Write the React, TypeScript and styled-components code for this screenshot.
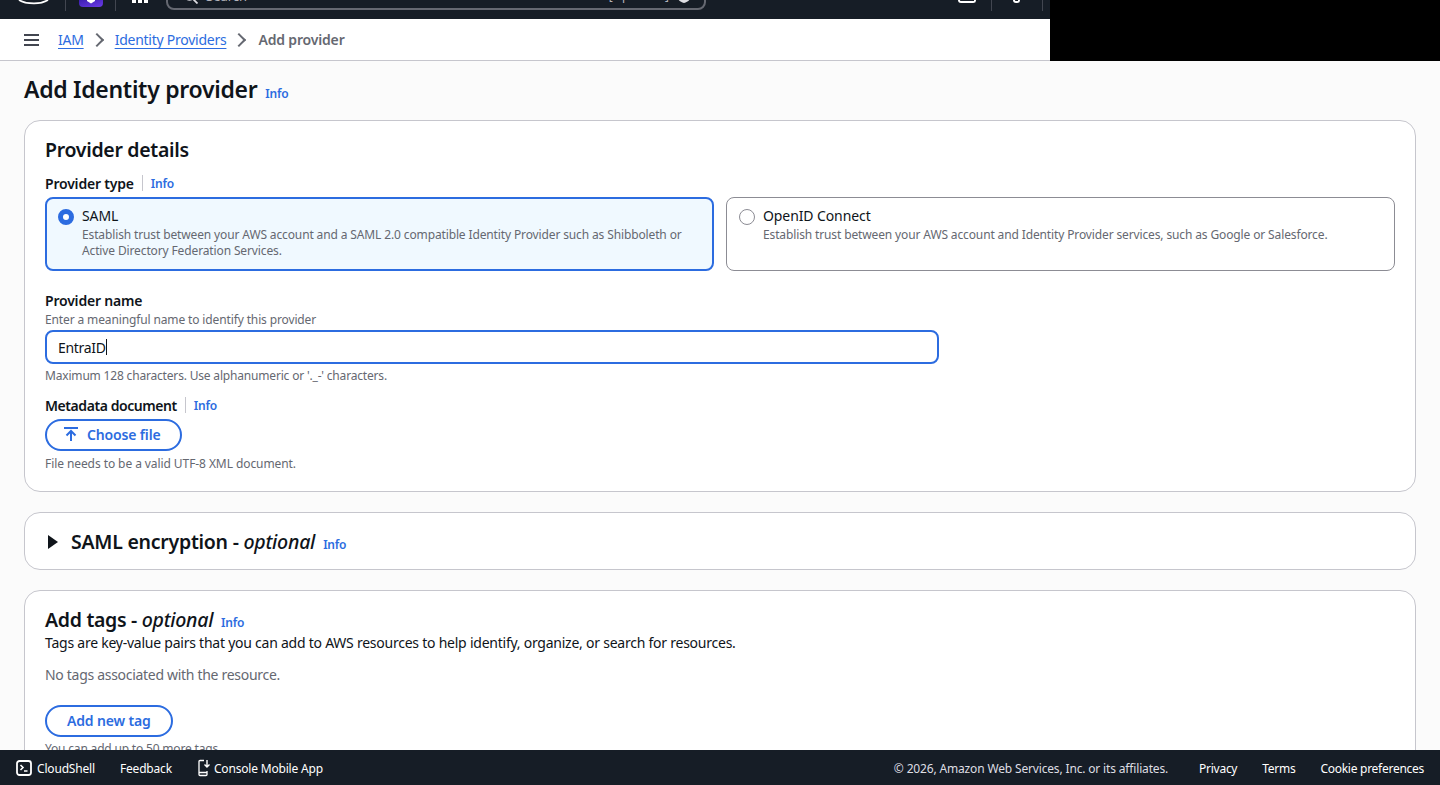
import styled, { createGlobalStyle } from 'styled-components';

const BLUE = '#2c6ce0';

const GlobalStyle = createGlobalStyle`
  html,
  body {
    margin: 0;
    height: 100%;
    overflow: hidden;
    font-family: 'Noto Sans', 'Open Sans', sans-serif;
    background: #fbfbfb;
  }
`;

const InfoLink = () => <InfoAnchor>Info</InfoAnchor>;

const App = () => {
  return (
    <>
      <GlobalStyle />
      <Page>
        <TopArea>
          <TopLeft>
            <ConsoleBar>
              <LogoSlot>
                <svg width="34" height="6" viewBox="0 0 34 6">
                  <path d="M1 0c4 2.600 10 3.400 15 3.400 5 0 10-1 14-3.400" fill="none" stroke="#fff" strokeWidth="1.800" />
                </svg>
              </LogoSlot>
              <BarDivider />
              <ServiceIcon width="24" height="7" viewBox="0 0 24 7">
                <defs>
                  <linearGradient id="svc" x1="0" y1="0" x2="1" y2="1">
                    <stop offset="0" stopColor="#3d1fb0" />
                    <stop offset="1" stopColor="#6a3be8" />
                  </linearGradient>
                </defs>
                <path d="M0 0h24v3a4 4 0 0 1-4 4H4a4 4 0 0 1-4-4z" fill="url(#svc)" />
                <path d="M8 0h8v1L12 3.500 8 1z" fill="#fff" />
              </ServiceIcon>
              <BarDivider />
              <GridDots>
                <i />
                <i />
                <i />
              </GridDots>
              <SearchBox>
                <SearchIcon width="14" height="14" viewBox="0 0 14 14">
                  <circle cx="5.500" cy="5.500" r="4.500" fill="none" stroke="#dedee3" strokeWidth="1.600" />
                  <path d="M9 9l4.500 4.500" stroke="#dedee3" strokeWidth="1.800" />
                </SearchIcon>
                <SearchText>Search</SearchText>
                <SearchHint>
                  [Option+S]
                  <SearchIcon width="14" height="14" viewBox="0 0 14 14">
                    <path d="M7 1 13 4v4c0 2.500-3 4-6 5-3-1-6-2.500-6-5V4z" fill="#dedee3" />
                  </SearchIcon>
                </SearchHint>
              </SearchBox>
              <BarRight>
                <MiniSquare />
                <BarDivider />
                <MiniDot />
                <BarDivider />
              </BarRight>
            </ConsoleBar>
            <Breadcrumbs>
              <MenuButton aria-label="Menu">
                <svg width="15" height="14" viewBox="0 0 15 14">
                  <path d="M0 2h15M0 7h15M0 12h15" stroke="#424650" strokeWidth="2" fill="none" />
                </svg>
              </MenuButton>
              <CrumbLink>IAM</CrumbLink>
              <Chevron />
              <CrumbLink>Identity Providers</CrumbLink>
              <Chevron />
              <CrumbCurrent>Add provider</CrumbCurrent>
            </Breadcrumbs>
          </TopLeft>
          <BlackBlock />
        </TopArea>

        <Main>
          <PageHeading>
            <PageTitle>Add Identity provider</PageTitle>
            <InfoLink />
          </PageHeading>

          <Card>
            <CardTitle>Provider details</CardTitle>

            <Label>
              Provider type
              <LabelDivider />
              <InfoLink />
            </Label>
            <TileRow>
              <Tile $selected>
                <Radio $checked />
                <div>
                  <TileTitle>SAML</TileTitle>
                  <TileText>
                    Establish trust between your AWS account and a SAML 2.0 compatible Identity Provider such as
                    Shibboleth or Active Directory Federation Services.
                  </TileText>
                </div>
              </Tile>
              <Tile>
                <Radio />
                <div>
                  <TileTitle>OpenID Connect</TileTitle>
                  <TileText>
                    Establish trust between your AWS account and Identity Provider services, such as Google or
                    Salesforce.
                  </TileText>
                </div>
              </Tile>
            </TileRow>

            <NameField>
              <Label>Provider name</Label>
              <Hint>Enter a meaningful name to identify this provider</Hint>
              <NameInput>
                EntraID
                <InputCaret />
              </NameInput>
              <Constraint>Maximum 128 characters. Use alphanumeric or '._-' characters.</Constraint>
            </NameField>

            <MetadataField>
              <MetadataLabel>
                Metadata document
                <LabelDivider />
                <InfoLink />
              </MetadataLabel>
              <PillButton $withIcon>
                <svg width="16" height="16" viewBox="0 0 16 16">
                  <path d="M1 2h14M8 15V5M3.500 9.500 8 5l4.500 4.500" fill="none" stroke={BLUE} strokeWidth="2" />
                </svg>
                Choose file
              </PillButton>
              <FileConstraint>File needs to be a valid UTF-8 XML document.</FileConstraint>
            </MetadataField>
          </Card>

          <CollapsedCard>
            <ExpandCaret viewBox="0 0 12 14" width="12" height="14">
              <path d="M1 0l10 7-10 7z" fill="#0f141a" />
            </ExpandCaret>
            <CardTitle>
              SAML encryption - <Optional>optional</Optional>
            </CardTitle>
            <InfoLink />
          </CollapsedCard>

          <Card>
            <TagsHeading>
              <CardTitle>
                Add tags - <Optional>optional</Optional>
              </CardTitle>
              <InfoLink />
            </TagsHeading>
            <BodyText>
              Tags are key-value pairs that you can add to AWS resources to help identify, organize, or search for
              resources.
            </BodyText>
            <EmptyText>No tags associated with the resource.</EmptyText>
            <PillButton>Add new tag</PillButton>
            <Constraint>You can add up to 50 more tags.</Constraint>
          </Card>
        </Main>

        <Footer>
          <FooterItem>
            <svg width="16" height="16" viewBox="0 0 16 16">
              <rect x="1" y="1" width="14" height="14" rx="2.500" fill="none" stroke="#fff" strokeWidth="1.800" />
              <path d="M4.500 5l2.500 2.500L4.500 10M8 11h3.500" fill="none" stroke="#fff" strokeWidth="1.600" />
            </svg>
            CloudShell
          </FooterItem>
          <FooterItem>Feedback</FooterItem>
          <MobileItem>
            <svg width="12" height="18" viewBox="0 0 12 18">
              <path d="M6 1.500H2a1 1 0 0 0-1 1v13a1 1 0 0 0 1 1h6a1 1 0 0 0 1-1V12M1 13.500h8" fill="none" stroke="#fff" strokeWidth="1.300" />
              <path d="M9 1v7M6.500 5.500 9 8l2.500-2.500" fill="none" stroke="#fff" strokeWidth="1.400" />
            </svg>
            Console Mobile App
          </MobileItem>
          <FooterRight>
            <FooterCopy>© 2026, Amazon Web Services, Inc. or its affiliates.</FooterCopy>
            <FooterItem>Privacy</FooterItem>
            <FooterItem>Terms</FooterItem>
            <FooterItem>Cookie preferences</FooterItem>
          </FooterRight>
        </Footer>
      </Page>
    </>
  );
};

const Page = styled.div`
  display: flex;
  flex-direction: column;
  height: 785px;
  overflow: hidden;
  color: #0f141a;
`;

const TopArea = styled.div`
  display: flex;
  flex: none;
  height: 61px;
`;

const TopLeft = styled.div`
  display: flex;
  flex-direction: column;
  width: 1050px;
`;

const BlackBlock = styled.div`
  flex: 1;
  background: #000;
`;

const ConsoleBar = styled.div`
  display: flex;
  align-items: flex-end;
  flex: none;
  height: 19px;
  padding-left: 18px;
  overflow: hidden;
  background: #161d26;
`;

const LogoSlot = styled.div`
  display: flex;
  width: 47px;
  height: 19px;
  svg {
    display: block;
  }
`;

const BarDivider = styled.span`
  width: 1px;
  height: 11px;
  margin-bottom: 8px;
  background: #424650;
`;

const ServiceIcon = styled.svg`
  margin: 0 12px 12px 13px;
`;

const GridDots = styled.span`
  display: flex;
  gap: 2px;
  margin: 0 0 16px 16px;
  i {
    width: 4px;
    height: 3px;
    background: #fff;
  }
`;

const SearchBox = styled.div`
  display: flex;
  flex: none;
  align-items: flex-start;
  gap: 8px;
  box-sizing: border-box;
  width: 540px;
  height: 28px;
  margin: 0 0 9px 18px;
  padding: 0 13px 0 16px;
  border: 2px solid #656871;
  border-radius: 8px;
  font-size: 13px;
  line-height: 14px;
  color: #b4b4bb;
`;

const SearchIcon = styled.svg`
  flex: none;
  margin-top: 6px;
`;

const SearchText = styled.span`
  padding-top: 5px;
`;

const SearchHint = styled.span`
  display: flex;
  gap: 8px;
  margin-left: auto;
  padding-top: 5px;
  font-size: 12px;

  svg {
    margin-top: 1px;
  }
`;

const BarRight = styled.div`
  display: flex;
  align-items: flex-end;
  margin-left: auto;
  margin-right: 7px;
`;

const MiniSquare = styled.span`
  width: 14px;
  height: 2px;
  margin: 0 15px 16px 0;
  border: solid #fff;
  border-width: 0 2px 2px;
  border-radius: 0 0 3px 3px;
`;

const MiniDot = styled.span`
  width: 3px;
  height: 1px;
  margin: 0 22px 16px 21px;
  border: solid #fff;
  border-width: 0 2px 2px;
  border-radius: 0 0 3px 3px;
`;

const Breadcrumbs = styled.nav`
  display: flex;
  flex: 1;
  align-items: center;
  box-sizing: border-box;
  padding-left: 24px;
  border-bottom: 1px solid #c6c6cd;
  background: #fff;
  font-size: 14px;
  letter-spacing: -0.25px;
`;

const MenuButton = styled.button`
  display: flex;
  width: 15px;
  margin-right: 19px;
  padding: 0;
  border: 0;
  background: none;
`;

const CrumbLink = styled.a`
  color: ${BLUE};
  text-decoration: underline;
  text-underline-offset: 3px;
`;

const Chevron = styled.span`
  box-sizing: border-box;
  width: 10px;
  height: 10px;
  margin: 0 13px 0 8px;
  border: solid #656871;
  border-width: 2px 2px 0 0;
  transform: rotate(45deg);
`;

const CrumbCurrent = styled.span`
  margin-left: 1px;
  font-weight: 600;
  letter-spacing: -0.17px;
  color: #656871;
`;

const Main = styled.main`
  flex: 1;
  min-height: 0;
  padding: 0 24px;
  overflow: hidden;
`;

const PageHeading = styled.div`
  display: flex;
  align-items: baseline;
  gap: 8px;
  height: 59px;
  padding-top: 12px;
  box-sizing: border-box;
`;

const PageTitle = styled.h1`
  margin: 0;
  font-size: 23px;
  line-height: 33px;
  font-weight: 600;
  letter-spacing: -0.3px;
`;

const InfoAnchor = styled.a`
  font-size: 12px;
  font-weight: 600;
  letter-spacing: -0.2px;
  color: ${BLUE};
`;

const Card = styled.section`
  box-sizing: border-box;
  margin-bottom: 20px;
  padding: 15px 20px 19px;
  border: 1px solid #c6c6cd;
  border-radius: 16px;
  background: #fff;
`;

const CardTitle = styled.h2`
  margin: 0 0 10px;
  font-size: 19.5px;
  line-height: 27px;
  font-weight: 600;
  letter-spacing: -0.3px;
`;

const Optional = styled.em`
  font-weight: 500;
  font-style: italic;
`;

const Label = styled.div`
  display: flex;
  align-items: center;
  height: 20px;
  font-size: 14px;
  font-weight: 600;
  letter-spacing: -0.2px;
`;

const MetadataLabel = styled(Label)`
  letter-spacing: -0.43px;
`;

const LabelDivider = styled.span`
  width: 1px;
  height: 16px;
  margin: 0 8px;
  background: #c6c6cd;
`;

const TileRow = styled.div`
  display: grid;
  grid-template-columns: 1fr 1fr;
  gap: 12px;
  margin-top: 4px;
`;

const Tile = styled.div<{ $selected?: boolean }>`
  display: flex;
  gap: 8px;
  box-sizing: border-box;
  height: 74px;
  padding: ${({ $selected }) => ($selected ? '8px 12px 8px 11px' : '9px 12px')};
  border: ${({ $selected }) => ($selected ? `2px solid ${BLUE}` : '1px solid #8c8c94')};
  border-radius: 8px;
  background: ${({ $selected }) => ($selected ? '#f0f9ff' : '#fff')};
`;

const Radio = styled.span<{ $checked?: boolean }>`
  flex: none;
  box-sizing: border-box;
  width: 16px;
  height: 16px;
  margin-top: 2px;
  border: ${({ $checked }) => ($checked ? `5px solid ${BLUE}` : '1px solid #8c8c94')};
  border-radius: 50%;
  background: #fff;
`;

const TileTitle = styled.div`
  margin-bottom: 2px;
  font-size: 14px;
  line-height: 18px;
  letter-spacing: -0.1px;
`;

const TileText = styled.div`
  font-size: 12px;
  line-height: 16px;
  letter-spacing: -0.13px;
  color: #656871;
`;

const NameField = styled.div`
  margin-top: 19px;
`;

const MetadataField = styled.div`
  margin-top: 11px;
`;

const Hint = styled.div`
  margin-top: 2px;
  font-size: 12px;
  line-height: 16px;
  letter-spacing: -0.13px;
  color: #656871;
`;

const NameInput = styled.div`
  display: flex;
  align-items: center;
  box-sizing: border-box;
  width: 894px;
  height: 34px;
  margin-top: 2px;
  padding-left: 11px;
  border: 2px solid ${BLUE};
  border-radius: 8px;
  font-size: 14px;
  letter-spacing: -0.3px;
`;

const InputCaret = styled.span`
  width: 1px;
  height: 16px;
  background: #0f141a;
`;

const Constraint = styled.div`
  margin-top: 4px;
  font-size: 12px;
  line-height: 16px;
  letter-spacing: -0.18px;
  color: #656871;
`;

const FileConstraint = styled(Constraint)`
  margin-top: 5px;
  letter-spacing: -0.08px;
`;

const PillButton = styled.button<{ $withIcon?: boolean }>`
  display: flex;
  align-items: center;
  justify-content: center;
  gap: 8px;
  box-sizing: border-box;
  height: 32px;
  margin-top: 4px;
  padding: ${({ $withIcon }) => ($withIcon ? '0 19px 2px 16px' : '0 20px 2px')};
  border: 2px solid ${BLUE};
  border-radius: 16px;
  background: #fff;
  font-family: inherit;
  font-size: 14px;
  font-weight: 600;
  letter-spacing: -0.15px;
  color: ${BLUE};
`;

const CollapsedCard = styled(Card)`
  display: flex;
  align-items: baseline;
  gap: 8px;
  height: 58px;
  padding: 15px 20px 0 22px;

  ${CardTitle} {
    margin: 0;
    letter-spacing: -0.25px;
  }
`;

const ExpandCaret = styled.svg`
  align-self: center;
  margin-right: 4px;
  margin-top: -14px;
`;

const TagsHeading = styled.div`
  display: flex;
  align-items: baseline;
  gap: 8px;

  ${CardTitle} {
    margin: 0;
  }
`;

const BodyText = styled.p`
  margin: 0;
  font-size: 14px;
  line-height: 20px;
  letter-spacing: -0.24px;
`;

const EmptyText = styled.p`
  margin: 12px 0 20px;
  font-size: 14px;
  line-height: 20px;
  letter-spacing: -0.3px;
  color: #656871;
`;

const Footer = styled.footer`
  display: flex;
  flex: none;
  align-items: center;
  gap: 25px;
  height: 35px;
  box-sizing: border-box;
  padding: 1px 16px 0;
  background: #161d26;
  font-size: 12px;
  letter-spacing: -0.18px;
  color: #fff;
`;

const FooterItem = styled.span`
  display: flex;
  align-items: center;
  gap: 5px;
`;

const MobileItem = styled(FooterItem)`
  margin-left: 1px;
  gap: 4px;
`;

const FooterRight = styled.div`
  display: flex;
  gap: 25px;
  margin-left: auto;
  letter-spacing: -0.27px;
`;

const FooterCopy = styled.span`
  margin-right: 6px;
  letter-spacing: -0.16px;
  color: #dedee3;
`;

export default App;
